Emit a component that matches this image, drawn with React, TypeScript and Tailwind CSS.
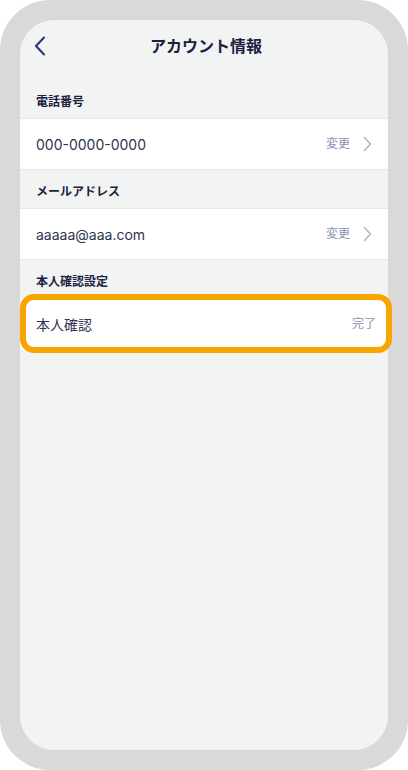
const jp = "font-['Inter','Noto_Sans_CJK_JP',sans-serif]";

function Chevron() {
  return (
    <svg width="9" height="16" viewBox="0 0 9 16" fill="none" className="ml-[13px]">
      <path d="M1.5 1.5L7.5 8L1.5 14.5" stroke="#aab1c6" strokeWidth="1.4" strokeLinecap="round" strokeLinejoin="round" />
    </svg>
  );
}

function SectionTitle({ label, top }: { label: string; top: string }) {
  return (
    <div className={`px-4 ${top} pb-[7px] text-[12px] leading-[18px] font-bold text-[#1d2240]`}>{label}</div>
  );
}

function Row({ value, action }: { value: string; action: string }) {
  return (
    <div className="flex h-[52px] items-center justify-between border-y border-[#e6e8ef] bg-white pl-4 pr-[16px]">
      <span className="text-[14px] text-[#2f3552]">{value}</span>
      <div className="flex items-center">
        <span className="text-[12px] text-[#8a93ae]">{action}</span>
        <Chevron />
      </div>
    </div>
  );
}

export default function App() {
  return (
    <div className={`h-[770px] w-[408px] bg-white ${jp}`}>
      <div className="h-full rounded-[50px] bg-[#d9d9d9] p-5">
        <div className="relative h-full rounded-[34px] bg-[#f2f4f3]">
          <div className="relative flex h-[52px] items-center justify-center">
            <svg
              width="12"
              height="20"
              viewBox="0 0 12 20"
              fill="none"
              className="absolute left-[14px] top-[16px]"
            >
              <path d="M10 1.5L2 10L10 18.5" stroke="#26317a" strokeWidth="2" strokeLinecap="round" strokeLinejoin="round" />
            </svg>
            <h1 className="pl-[4px] text-[16px] font-bold text-[#1b2040]">アカウント情報</h1>
          </div>

          <SectionTitle label="電話番号" top="pt-[21px]" />
          <Row value="000-0000-0000" action="変更" />

          <SectionTitle label="メールアドレス" top="pt-[13px]" />
          <Row value="aaaaa@aaa.com" action="変更" />

          <SectionTitle label="本人確認設定" top="pt-[13px]" />
          <div className="relative flex h-[52px] items-center justify-between bg-white pl-4 pr-[12px]">
            <span className="text-[14px] text-[#2f3552]">本人確認</span>
            <span className="text-[12px] text-[#8a93ae]">完了</span>
            <div className="absolute -left-0 -right-[4px] -top-[4px] -bottom-[3px] rounded-[14px] border-[6px] border-[#f7a600]" />
          </div>
        </div>
      </div>
    </div>
  );
}
